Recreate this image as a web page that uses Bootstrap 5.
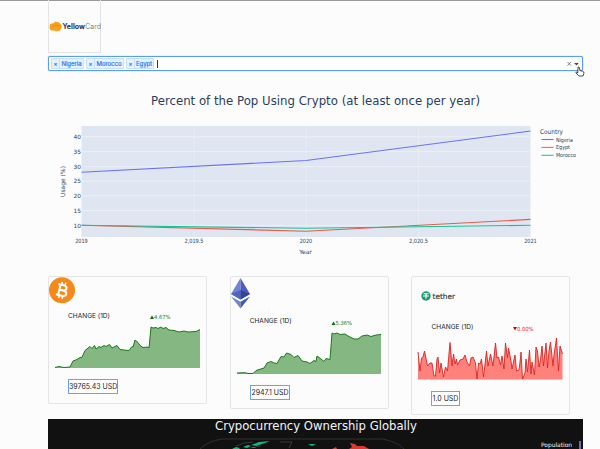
<!DOCTYPE html>
<html lang="en">
<head>
<meta charset="utf-8">
<title>YellowCard crypto dashboard</title>
<link href="https://cdn.jsdelivr.net/npm/bootstrap@5.3.0/dist/css/bootstrap.min.css" rel="stylesheet">
<style>
body{width:600px;height:449px;overflow:hidden;background:#fcfcfd;font-family:Inter,"Liberation Sans",sans-serif;color:#212529;box-shadow:inset 0 1px #999}
.wrap{width:535px;margin-left:48px}
.brand-box{width:53px;height:53px;border-color:#e2e4e7!important;border-top:0!important}
.picker{height:15px;margin-top:3px;border:1px solid #5b9cf5;border-radius:2px;background:#fff;padding-left:2px;box-shadow:0 0 1px #5b9cf5}
.tag{height:11px;border:1px solid #c6dffc;background:#e6f1ff;color:#2080e8;font-size:6px;line-height:9px;border-radius:1px;margin-right:2px;-webkit-text-stroke:.2px}
.tag i{font-style:normal;width:8px;text-align:center;border-right:1px solid #c6dffc}
.tag b{font-weight:400;flex:1;text-align:center;white-space:nowrap;letter-spacing:-.05px}
.tag-n{width:33px}.tag-m{width:38px}.tag-e{width:28px}
.caret{width:1px;height:8px;background:#333;margin-left:1px}
.plot{height:205px;display:block;overflow:visible}
svg text{font-family:"DejaVu Sans",sans-serif}
.tick{font-size:5.8px;fill:#2a3f5f}
.coins{gap:23px}
.coin{width:159px;border:1px solid #e4e5e7;border-radius:2px;background:transparent}
.coin:last-child{margin-left:-1px}
.coin svg{display:block}
.coin svg .lbl{font-family:Inter,sans-serif;font-size:6.7px;fill:#212529}
.price{height:15px;border:1px solid #6ea0f0;font-size:7px;line-height:13px;margin-left:19px;text-align:center;background:#fff;color:#212529;white-space:nowrap}
.globe{height:31px;background:#111;overflow:hidden}
.pointer{position:absolute;left:574.5px;top:66px}
</style>
<script src="https://cdn.jsdelivr.net/npm/bootstrap@5.3.0/dist/js/bootstrap.bundle.min.js"></script>
</head>
<body>
<main class="wrap d-flex flex-column">
  <div class="brand-box border">
    <svg width="51" height="52" viewBox="49 0 51 52" class="d-block overflow-visible">
      <path d="M50 24l4-1 1-1.500 4 1 2 2 1 2-2 4-4 1-1-1-4 0-1.500-2z" fill="#f9a01b"/>
      <path d="M52 27l3-2 3 1 2-1" stroke="#f07f13" stroke-width=".8" fill="none"/>
      <text x="62.500" y="29" font-size="7" font-weight="700" fill="#2b303c" textLength="22.500" lengthAdjust="spacingAndGlyphs" style="font-family:Inter">Yellow</text>
      <text x="85.200" y="29" font-size="7" fill="#666" textLength="15.700" lengthAdjust="spacingAndGlyphs" style="font-family:Inter;font-weight:300">Card</text>
    </svg>
  </div>
  <div class="picker d-flex align-items-center">
    <span class="tag tag-n d-flex"><i>×</i><b>Nigeria</b></span>
    <span class="tag tag-m d-flex"><i>×</i><b>Morocco</b></span>
    <span class="tag tag-e d-flex"><i>×</i><b>Egypt</b></span>
    <span class="caret"></span>
    <svg class="ms-auto" style="margin-right:2px" width="14" height="8" viewBox="0 0 14 8"><path d="M1.500 2l3.500 3.700M5 2L1.500 5.700" stroke="#777" stroke-width=".9"/><path d="M8.200 3h4.500l-2.250 2.500z" fill="#444"/></svg>
  </div>
  <svg class="plot" id="plot" width="535" height="205" viewBox="48 71 535 205"></svg>
  <div class="coins d-flex align-items-start">
    <section class="coin" style="height:128px">
      <svg width="157" height="102" viewBox="49 277 157 102">
        <circle cx="62" cy="290.300" r="13" fill="#f7881a"/>
        <g transform="rotate(13 62 290.300)" fill="none" stroke="#fff" stroke-width="2"><path d="M57 285h5.500q3.500 0 3.500 2.600t-3.500 2.600H59h4q4 0 4 2.700t-4 2.700h-6M59.300 285v10.500"/><path d="M60.500 282v3M64 282v3M60.500 295.500v3M64 295.500v3" stroke-width="1.500"/></g>
        <text class="lbl" x="68" y="317.500" textLength="42" lengthAdjust="spacingAndGlyphs">CHANGE (1D)</text>
        <path d="M150 319h4l-2-3.500z" fill="#086e08"/><text x="154" y="319.300" font-size="5.600" fill="#188018" textLength="16.500" lengthAdjust="spacingAndGlyphs">4.67%</text>
        <path fill="#84b781" d="M55 368L55 367.500 59 366.500 64 367.500 70 367 73 361 77 359.500 80 357.500 82 357.300 85 350.500 90 346.500 92 348.500 94.500 345.500 96 349 99 346.500 101 347.500 104 345.500 106 346.500 109.500 344.500 112 348 117 345.500 120 349.500 124 350 129 350.500 132 346.500 133 347 135 340 138 342.500 140 345.500 143 347.500 148 347 149 348 151 327 153 328 156 327.500 158 328.500 161 327 163 328.500 166 327.500 169 330 174 330.500 179 332 184 331 188 332 196 331.500 200 329.500V368z"/>
        <path fill="none" stroke="#177d17" d="M55 367.500 59 366.500 64 367.500 70 367 73 361 77 359.500 80 357.500 82 357.300 85 350.500 90 346.500 92 348.500 94.500 345.500 96 349 99 346.500 101 347.500 104 345.500 106 346.500 109.500 344.500 112 348 117 345.500 120 349.500 124 350 129 350.500 132 346.500 133 347 135 340 138 342.500 140 345.500 143 347.500 148 347 149 348 151 327 153 328 156 327.500 158 328.500 161 327 163 328.500 166 327.500 169 330 174 330.500 179 332 184 331 188 332 196 331.500 200 329.500"/>
      </svg>
      <div class="price" style="width:50px">39765.43 USD</div>
    </section>
    <section class="coin" style="height:133px">
      <svg width="157" height="108" viewBox="231 277 157 108">
        <path d="M240.500 278l-9.500 16 9.500 5.500z" fill="#7185d4"/><path d="M240.500 278l9.500 16-9.500 5.500z" fill="#4c5ebb"/><path d="M231 294l9.500-4v9.500z" fill="#5066bd"/><path d="M250 294l-9.500-4v9.500z" fill="#34439b"/><path d="M231 296.500l9.500 5.300v6.700z" fill="#7185d4"/><path d="M250 296.500l-9.500 5.300v6.700z" fill="#4658b4"/>
        <text class="lbl" x="249.700" y="323" textLength="42" lengthAdjust="spacingAndGlyphs">CHANGE (1D)</text>
        <path d="M331.500 325h4l-2-3.500z" fill="#086e08"/><text x="335.500" y="325" font-size="5.600" fill="#188018" textLength="16.500" lengthAdjust="spacingAndGlyphs">5.36%</text>
        <path fill="#84b781" d="M237 374V373L245 372.700 248 373.500 253 373.500 256 370.500 264 368 267 363 271 361.500 274 363 277 363.500 281 356.500 284 357 286.500 353 291 354.500 294 357.500 298 355.500 302 361 307 362 310 363.500 314 360.500 316 361.500 317 356 321 359 324 361.500 326 358.500 330 359.500 332 333 334 334 337 333 340 334.500 345 334 348 336 354 339 358 339 362 336 367 335 371 336.500 376 335 381 334.500V374z"/>
        <path fill="none" stroke="#177d17" d="M237 373 245 372.700 248 373.500 253 373.500 256 370.500 264 368 267 363 271 361.500 274 363 277 363.500 281 356.500 284 357 286.500 353 291 354.500 294 357.500 298 355.500 302 361 307 362 310 363.500 314 360.500 316 361.500 317 356 321 359 324 361.500 326 358.500 330 359.500 332 333 334 334 337 333 340 334.500 345 334 348 336 354 339 358 339 362 336 367 335 371 336.500 376 335 381 334.500"/>
      </svg>
      <div class="price" style="width:40px">2947.1 USD</div>
    </section>
    <section class="coin" style="height:139px">
      <svg width="157" height="114" viewBox="412 277 157 114">
        <circle cx="426" cy="296" r="4.700" fill="#1a9a70"/><path d="M423.500 293.800h5M426 293.800v5M423 296h6" stroke="#fff" stroke-width="1.100"/>
        <text x="432.500" y="298.500" font-size="7.500" fill="#33383d" stroke="#33383d" stroke-width=".15" textLength="22.500" lengthAdjust="spacingAndGlyphs">tether</text>
        <text class="lbl" x="431.500" y="329" textLength="42" lengthAdjust="spacingAndGlyphs">CHANGE (1D)</text>
        <path d="M513 327h4l-2 3.500z" fill="#e00000"/><text x="517" y="330.800" font-size="5.600" fill="#f02020" textLength="16.500" lengthAdjust="spacingAndGlyphs">0.00%</text>
        <path id="redArea" fill="#ff817c"/><path id="redLine" fill="none" stroke="#d9221e" stroke-width=".9"/>
      </svg>
      <div class="price" style="width:29px">1.0 USD</div>
    </section>
  </div>
  <div class="globe" style="margin-top:4px">
    <svg width="535" height="31" viewBox="48 419 535 31" class="d-block">
      <text x="215" y="430" font-size="12" fill="#f2f5fa" textLength="202" lengthAdjust="spacingAndGlyphs">Crypocurrency Ownership Globally</text>
      <path d="M200 449q8-8 22-10h160q14 2 22 10" fill="none" stroke="#3c3c3c" stroke-width=".7"/>
      <path d="M251 445l8-3 11-1-5 2-9 3zM232 449l4-2 4 1-2 2zM243 447l5-2 3 1-4 2zM250 448l4-1 2 1zM308 444l8 0-4 2z" fill="#14b87d"/>
      <path d="M236 446l8-3 9-1M280 442l12 0-3 6M255 447l6-1" stroke="#555" fill="none" stroke-width=".6"/>
      <path d="M332 449l4-2 1 2zM350 443l5 1 2 2 7 0 5 3h-20l3-2-1-2z" fill="#d93a30"/>
      <text x="541" y="447" font-size="6" fill="#f2f5fa" textLength="31" lengthAdjust="spacingAndGlyphs">Population</text>
      <path d="M579 441h2v9h-2z" fill="#6972a8"/>
    </svg>
  </div>
</main>
<svg class="pointer" width="10" height="12" viewBox="0 0 10 12"><path d="M3 1q1.200-.5 1.500 1l.3 2.500 3 .8q1.400.4 1.100 2L8 10H4L1 7q-.5-1.300.8-.8l1 .8z" fill="#fff" stroke="#222" stroke-width=".8"/></svg>
<script>
const X0=81.500,X1=530.500,Y=v=>225.300-(v-10)*2.947;
const line=(a,c)=>`<path d="M${X0} ${Y(a[0])}L306 ${Y(a[1])}L${X1} ${Y(a[2])}" fill="none" stroke="${c}" stroke-width="1.1"/>`;
let h=`<text x="151" y="105" font-size="12" fill="#2a3f5f" textLength="329" lengthAdjust="spacingAndGlyphs">Percent of the Pop Using Crypto (at least once per year)</text><rect x="81.500" y="126" width="449" height="111" fill="#dfe6f1"/>`;
for(let v=10;v<=40;v+=5)h+=`<path d="M81.500 ${Y(v)}H530.500" stroke="#f0f4fa" stroke-width=".7"/><text class="tick" x="81" y="${Y(v)+2.2}" text-anchor="end">${v}</text>`;
[[81.5,'2019'],[194,'2,019.5'],[306,'2020'],[418.500,'2,020.5'],[530.5,'2021']].forEach(([x,t])=>h+=`<path d="M${x} 126V237" stroke="#edf1f8" stroke-width=".6"/><text class="tick" x="${x}" y="243" text-anchor="middle" textLength="${t.length>4?19:12.500}" lengthAdjust="spacingAndGlyphs">${t}</text>`);
h+=line([28,32,42],'#6a73f5')+line([10,8,12],'#ea5b4a')+line([10,9,10],'#16c491');
h+=`<text x="305.500" y="254" font-size="6" fill="#2a3f5f" text-anchor="middle">Year</text><text transform="translate(65 181.500) rotate(-90)" font-size="6" fill="#2a3f5f" text-anchor="middle">Usage (%)</text><text x="540" y="133.500" font-size="6.400" fill="#2a3f5f" textLength="23" lengthAdjust="spacingAndGlyphs">Country</text>`;
[['Nigeria','#6a73f5',17],['Egypt','#ef6a58',14],['Morocco','#2fc39a',20]].forEach(([t,c,w],i)=>{const y=139.500+i*7.900;h+=`<path d="M541.500 ${y}h12" stroke="${c}" stroke-width="1.100"/><text x="556" y="${y+2}" font-size="5.500" fill="#2a3f5f" textLength="${w}" lengthAdjust="spacingAndGlyphs">${t}</text>`});
document.getElementById('plot').innerHTML=h;
const pts=[[418,352],[420,371],[421.5,358],[423,357],[424.500,351],[427.500,366],[430,363],[432,363],[434,376],[435.500,376],[437,359],[438,357],[439.500,373],[441,363],[443.500,377],[445.500,367],[447.500,371],[450,342.500],[452,366],[453.500,354],[455,364],[456.500,359],[457.500,365],[460,360],[463,359],[465,355],[467,362],[469.500,366],[471,358],[473,357],[475.500,363],[477,379],[478.500,363],[480,364],[481.500,359],[483.500,377],[486.500,351],[488,366],[490.500,354],[493,366],[495.500,343],[497,358],[498.500,357],[500.500,365],[502,356],[504,369],[505.500,343],[507.500,358],[508.500,348],[511,361],[512,369],[515,355],[516.500,371],[519,370],[520.500,358],[521,352],[522.500,379],[525,373],[526,359],[527.500,372],[529.500,350],[531,374],[532,362],[534.500,375],[536,347],[537.500,351],[539,367],[540.500,360],[542,346],[543.500,366],[546,343],[547.500,368],[549,351],[550.500,342],[553,366],[554,355],[556.500,338],[558.500,371],[560,346],[562.500,354]];
const p='M'+pts.map(q=>q.join(' ')).join('L');
document.getElementById('redLine').setAttribute('d',p);
document.getElementById('redArea').setAttribute('d',p+'V379.500H418z');
</script>
</body>
</html>
